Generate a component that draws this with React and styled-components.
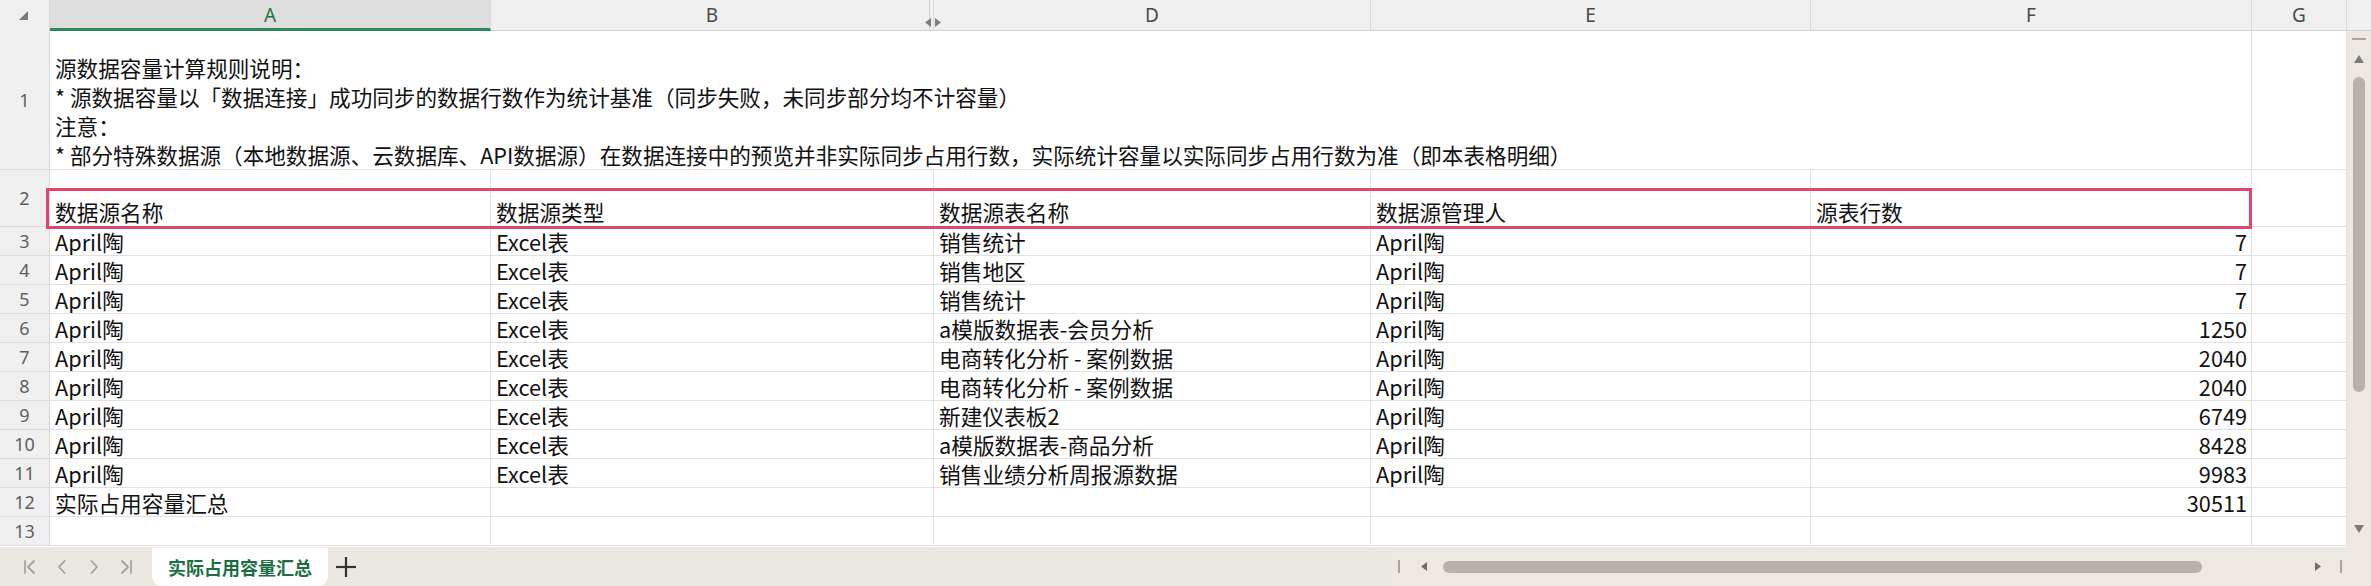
import React from 'react';
import styled, { createGlobalStyle } from 'styled-components';

const GlobalStyle = createGlobalStyle`
  html, body { margin: 0; padding: 0; background: #ffffff; }
  body { font-family: "Noto Sans CJK SC", "Noto Sans", sans-serif; }
  * { box-sizing: border-box; }
`;

const COLS = '50px 441px 443px 437px 440px 441px 95px';
const CJK = `"Noto Sans CJK SC", "Noto Sans", sans-serif`;
const UI = `"Noto Sans", "Noto Sans CJK SC", sans-serif`;

const Page = styled.div`
  position: relative;
  width: 2371px;
  height: 586px;
  overflow: hidden;
  display: flex;
  flex-direction: column;
  background: #ffffff;
`;

const HeaderRow = styled.div`
  display: grid;
  grid-template-columns: ${COLS} 24px;
  height: 30px;
  flex: none;
  background: #f0f0f0;
`;

const Corner = styled.div`
  display: flex;
  align-items: center;
  padding-left: 19px;
  border-right: 1px solid #d6d6d6;
  border-bottom: 1px solid #d2d2d2;
`;

const ColHead = styled.div`
  position: relative;
  z-index: ${p => (p.$hiddenAfter ? 2 : 1)};
  display: flex;
  align-items: center;
  justify-content: center;
  font-family: ${UI};
  font-size: 19px;
  color: ${p => (p.$active ? '#217346' : '#4a4a4a')};
  background: ${p => (p.$active ? '#dedede' : '#f0f0f0')};
  border-right: ${p => (p.$last ? 'none' : '1px solid #d9d9d9')};
  border-bottom: ${p => (p.$active ? '3px solid #2a8a5c' : '1px solid #d2d2d2')};
  padding-top: ${p => (p.$active ? '2px' : '0')};
  &::before {
    content: '';
    display: ${p => (p.$hiddenAfter ? 'block' : 'none')};
    position: absolute;
    right: 3px;
    top: 0;
    bottom: 0;
    width: 1px;
    background: #d0d0d0;
  }
`;

const HiddenMark = styled.svg`
  position: absolute;
  right: -8px;
  bottom: 3px;
  z-index: 3;
`;

const Body = styled.div`
  display: flex;
  flex: none;
  height: 517px;
`;

const Sheet = styled.div`
  width: 2347px;
  height: 517px;
  overflow: hidden;
  background: #ffffff;
`;

const Row = styled.div`
  display: grid;
  grid-template-columns: ${COLS};
  height: ${p => p.$h}px;
`;

const RowHead = styled.div`
  background: #f0f0f0;
  border-right: 1px solid #d6d6d6;
  border-bottom: 1px solid #dcdcdc;
  display: flex;
  align-items: center;
  justify-content: center;
  font-family: ${UI};
  font-size: 18px;
  color: #5f5f5f;
`;

const Cell = styled.div`
  grid-column: span ${p => p.$span || 1};
  border-right: 1px solid #e1e1e1;
  border-bottom: 1px solid #e1e1e1;
  padding: 0 4px 0 5px;
  font-family: ${CJK};
  font-size: 21.7px;
  line-height: ${p => (p.$bottom ? '28px' : '29px')};
  color: #111111;
  white-space: nowrap;
  overflow: hidden;
  display: flex;
  align-items: ${p => (p.$bottom ? 'flex-end' : 'flex-start')};
  justify-content: ${p => (p.$right ? 'flex-end' : 'flex-start')};
`;

const NoteCell = styled(Cell)`
  flex-direction: column;
  justify-content: flex-end;
  align-items: flex-start;
  line-height: 29px;
  font-size: 21.6px;
  overflow: visible;
`;

const Annotation = styled.div`
  position: absolute;
  left: 46px;
  top: 188px;
  width: 2206px;
  height: 41px;
  border: 3px solid #e0446f;
  pointer-events: none;
`;

const VScroll = styled.div`
  width: 24px;
  height: 517px;
  background: #eee9e0;
  display: flex;
  flex-direction: column;
  align-items: center;
`;

const Dash = styled.div`
  width: 14px;
  height: 2px;
  margin-top: 8px;
  background: #aaa69e;
`;

const Tri = styled.svg`
  flex: none;
  display: block;
  margin-top: ${p => p.$mt || 0}px;
  margin-bottom: ${p => p.$mb || 0}px;
  margin-left: ${p => p.$ml || 0}px;
`;

const VThumb = styled.div`
  width: 12px;
  height: 315px;
  margin-top: 14px;
  border-radius: 6px;
  background: #b6b2a9;
`;

const Spacer = styled.div`
  flex: 1;
`;

const BottomBar = styled.div`
  flex: none;
  height: 39px;
  background: #ebe7e1;
  display: flex;
  align-items: center;
`;

const NavGroup = styled.div`
  display: flex;
  padding-left: 14px;
`;

const NavButton = styled.div`
  width: 32px;
  height: 20px;
  display: flex;
  align-items: center;
  justify-content: center;
`;

const Tab = styled.div`
  align-self: flex-end;
  margin-left: 10px;
  width: 176px;
  height: 38px;
  background: #ffffff;
  border-radius: 0 0 10px 10px;
  display: flex;
  align-items: center;
  justify-content: center;
  font-family: ${CJK};
  font-weight: 700;
  font-size: 18px;
  color: #1b6e42;
  padding-bottom: 1px;
`;

const PlusButton = styled.svg`
  margin-left: 8px;
  flex: none;
`;

const HScroll = styled.div`
  margin-left: auto;
  width: 981px;
  height: 100%;
  display: flex;
  align-items: center;
  background: #eee9e0;
`;

const Bar = styled.div`
  flex: none;
  width: 2px;
  height: 13px;
  margin-left: ${p => p.$ml}px;
  margin-right: ${p => p.$mr || 0}px;
  background: #aaa69f;
`;

const HThumb = styled.div`
  flex: none;
  width: 759px;
  height: 12px;
  margin-left: 16px;
  border-radius: 6px;
  background: #b6b2a9;
`;

const header = ['数据源名称', '数据源类型', '数据源表名称', '数据源管理人', '源表行数'];

const rows = [
  ['April陶', 'Excel表', '销售统计', 'April陶', '7'],
  ['April陶', 'Excel表', '销售地区', 'April陶', '7'],
  ['April陶', 'Excel表', '销售统计', 'April陶', '7'],
  ['April陶', 'Excel表', 'a模版数据表-会员分析', 'April陶', '1250'],
  ['April陶', 'Excel表', '电商转化分析 - 案例数据', 'April陶', '2040'],
  ['April陶', 'Excel表', '电商转化分析 - 案例数据', 'April陶', '2040'],
  ['April陶', 'Excel表', '新建仪表板2', 'April陶', '6749'],
  ['April陶', 'Excel表', 'a模版数据表-商品分析', 'April陶', '8428'],
  ['April陶', 'Excel表', '销售业绩分析周报源数据', 'April陶', '9983'],
  ['实际占用容量汇总', '', '', '', '30511'],
  ['', '', '', '', ''],
];

const notes = [
  '源数据容量计算规则说明：',
  '* 源数据容量以「数据连接」成功同步的数据行数作为统计基准（同步失败，未同步部分均不计容量）',
  '注意：',
  '* 部分特殊数据源（本地数据源、云数据库、API数据源）在数据连接中的预览并非实际同步占用行数，实际统计容量以实际同步占用行数为准（即本表格明细）',
];

const colLetters = ['A', 'B', 'D', 'E', 'F', 'G'];

const NavIcon = ({ kind }) => (
  <svg width="14" height="16" viewBox="0 0 14 16" fill="none" stroke="#a3a3a3" strokeWidth="1.8" strokeLinecap="round" strokeLinejoin="round">
    {kind === 'first' && (<><line x1="2" y1="2" x2="2" y2="14" /><polyline points="11,2 5,8 11,14" /></>)}
    {kind === 'prev' && <polyline points="9.5,2 4,8 9.5,14" />}
    {kind === 'next' && <polyline points="4.5,2 10,8 4.5,14" />}
    {kind === 'last' && (<><polyline points="3,2 9,8 3,14" /><line x1="12" y1="2" x2="12" y2="14" /></>)}
  </svg>
);

export default function App() {
  return (
    <>
      <GlobalStyle />
      <Page>
        <HeaderRow>
          <Corner>
            <svg width="9" height="9" viewBox="0 0 9 9"><polygon points="9,0 9,9 0,9" fill="#7a7a7a" /></svg>
          </Corner>
          {colLetters.map((l, i) => (
            <ColHead key={l} $active={i === 0} $hiddenAfter={l === 'B'}>
              {l}
              {l === 'B' && (
                <HiddenMark width="16" height="9" viewBox="0 0 16 9">
                  <polygon points="0,4.5 6,0 6,9" fill="#7d7d7d" />
                  <polygon points="10,0 16,4.5 10,9" fill="#7d7d7d" />
                </HiddenMark>
              )}
            </ColHead>
          ))}
          <ColHead $last />
        </HeaderRow>

        <Body>
          <Sheet>
            <Row $h={140}>
              <RowHead>1</RowHead>
              <NoteCell $span={5}>
                {notes.map((n, i) => (
                  <div key={i}>{n}</div>
                ))}
              </NoteCell>
              <Cell />
            </Row>
            <Row $h={57}>
              <RowHead>2</RowHead>
              {header.map((h, i) => (
                <Cell key={i} $bottom>{h}</Cell>
              ))}
              <Cell />
            </Row>
            {rows.map((r, ri) => (
              <Row key={ri} $h={29}>
                <RowHead>{ri + 3}</RowHead>
                {r.map((v, ci) => (
                  <Cell key={ci} $right={ci === 4}>{v}</Cell>
                ))}
                <Cell />
              </Row>
            ))}
          </Sheet>
          <VScroll>
            <Dash />
            <Tri width="10" height="8" viewBox="0 0 10 8" $mt={15}><polygon points="5,0 10,8 0,8" fill="#7b7b7b" /></Tri>
            <VThumb />
            <Spacer />
            <Tri width="10" height="8" viewBox="0 0 10 8" $mb={14}><polygon points="0,0 10,0 5,8" fill="#7b7b7b" /></Tri>
          </VScroll>
        </Body>

        <BottomBar>
          <NavGroup>
            <NavButton><NavIcon kind="first" /></NavButton>
            <NavButton><NavIcon kind="prev" /></NavButton>
            <NavButton><NavIcon kind="next" /></NavButton>
            <NavButton><NavIcon kind="last" /></NavButton>
          </NavGroup>
          <Tab>实际占用容量汇总</Tab>
          <PlusButton width="20" height="20" viewBox="0 0 20 20" stroke="#333" strokeWidth="2.2">
            <line x1="10" y1="0" x2="10" y2="20" />
            <line x1="0" y1="10" x2="20" y2="10" />
          </PlusButton>
          <HScroll>
            <Bar $ml={8} />
            <Tri width="6" height="9" viewBox="0 0 6 9" $ml={21}><polygon points="0,4.5 6,0 6,9" fill="#6f6f6f" /></Tri>
            <HThumb />
            <Spacer />
            <Tri width="6" height="9" viewBox="0 0 6 9"><polygon points="0,0 6,4.5 0,9" fill="#6f6f6f" /></Tri>
            <Bar $ml={19} $mr={29} />
          </HScroll>
        </BottomBar>

        <Annotation />
      </Page>
    </>
  );
}
